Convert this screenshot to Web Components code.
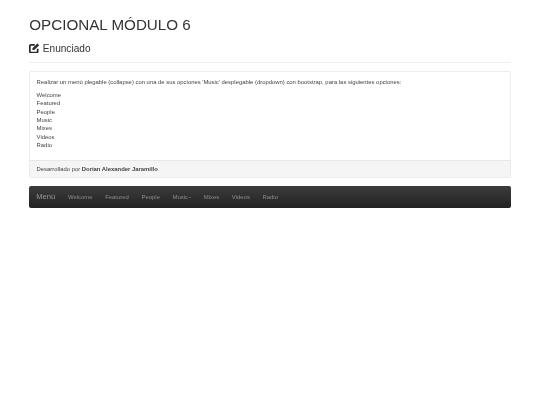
<!DOCTYPE html>
<html lang="es">
<head>
<meta charset="utf-8">
<title>Opcional Módulo 6</title>
<style>
  html, body { margin: 0; background: #fff; }
  body { font-family: "Liberation Sans", Arial, sans-serif; font-size: 5.9px; line-height: 8.43px; color: #444; }
  /* the reference is a downscaled capture, so its text is soft */
  main { display: block; padding: 0 29.500px 0 29.300px; filter: blur(0.4px); }
</style>
</head>
<body>
<main>
  <page-heading title="OPCIONAL MÓDULO 6" subtitle="Enunciado"></page-heading>
  <info-panel>
    <p>Realizar un menú plegable (collapse) con una de sus opciones 'Music' desplegable (dropdown) con bootstrap, para las siguientes opciones:</p>
    <div>Welcome</div>
    <div>Featured</div>
    <div>People</div>
    <div>Music</div>
    <div>Mixes</div>
    <div>Videos</div>
    <div>Radio</div>
    <span slot="footer">Desarrollado por <b>Dorian Alexander Jaramillo</b></span>
  </info-panel>
  <nav-bar brand="Menú" items="Welcome,Featured,People,Music*,Mixes,Videos,Radio"></nav-bar>
</main>
<script>
class PageHeading extends HTMLElement {
  constructor() {
    super();
    this.attachShadow({ mode: 'open' });
    this.shadowRoot.innerHTML = `
      <style>
        :host { display: block; padding-top: 15px; }
        h1 { margin: 0; font-size: 15.2px; line-height: 20px; font-weight: 400; color: #333; }
        h3 { margin: 8px 0 0; font-size: 10.1px; line-height: 12px; font-weight: 400; color: #333; display: flex; align-items: center; gap: 3px; }
        svg { width: 10.5px; height: 10.5px; display: block; margin-top: -2px; }
        hr { border: 0; border-top: 1px solid #eee; margin: 7px 0 8px; }
      </style>
      <h1>${this.getAttribute('title')}</h1>
      <h3>
        <svg viewBox="0 0 20 20"><path d="M16.500 11v5a2.500 2.500 0 0 1-2.500 2.500H4A2.500 2.500 0 0 1 1.500 16V6A2.500 2.500 0 0 1 4 3.500h7" fill="none" stroke="#2b2b2b" stroke-width="3.400"/><path d="M6.500 10 16 .8 19.500 4.300 10 13.500H6.500z" fill="#2b2b2b"/></svg>
        <span>${this.getAttribute('subtitle')}</span>
      </h3>
      <hr>`;
  }
}

class InfoPanel extends HTMLElement {
  constructor() {
    super();
    this.attachShadow({ mode: 'open' });
    this.shadowRoot.innerHTML = `
      <style>
        :host { display: block; border: 1px solid #e8eef2; border-radius: 2px; background: #fff; margin-bottom: 8px; }
        .body { padding: 6px 6.300px; height: 76px; }
        .foot { padding: 3.800px 6.300px; background: #f5f5f5; border-top: 1px solid #e8e8e8; }
        ::slotted(p) { margin: 0 0 4.200px; }
      </style>
      <div class="body"><slot></slot></div>
      <div class="foot"><slot name="footer"></slot></div>`;
  }
}

class NavBar extends HTMLElement {
  constructor() {
    super();
    this.attachShadow({ mode: 'open' });
    const items = this.getAttribute('items').split(',').map(item => {
      if (item.endsWith('*')) return `<a>${item.slice(0, -1)}<i></i></a>`;
      return `<a>${item}</a>`;
    }).join('');
    this.shadowRoot.innerHTML = `
      <style>
        :host { display: flex; align-items: center; height: 22px; padding-left: 7px; border-radius: 2px; background: linear-gradient(#3c3c3c, #222); color: #8c8c8c; }
        .brand { font-size: 7.600px; margin-right: 6.300px; color: #999; }
        a { padding: 0 6.300px; font-size: 5.950px; }
        i { display: inline-block; width: 0; height: 0; margin-left: 1px; vertical-align: middle; border-top: 1.700px solid #8c8c8c; border-left: 1.700px solid transparent; border-right: 1.700px solid transparent; }
      </style>
      <span class="brand">${this.getAttribute('brand')}</span>
      ${items}`;
  }
}

customElements.define('page-heading', PageHeading);
customElements.define('info-panel', InfoPanel);
customElements.define('nav-bar', NavBar);
</script>
</body>
</html>
